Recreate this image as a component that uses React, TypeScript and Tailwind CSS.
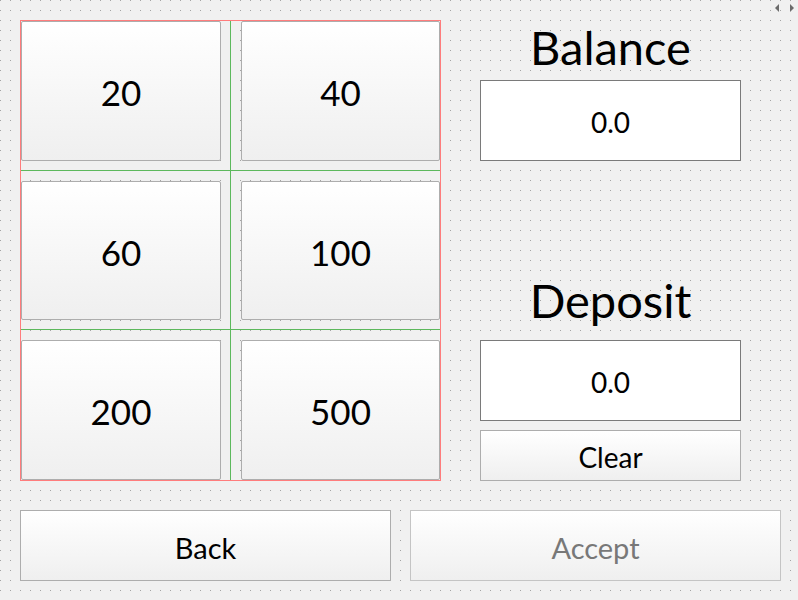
import React from "react";

const font = { fontFamily: "Lato, 'Noto Sans', sans-serif" };

function GridButton({ label }: { label: string }) {
  return (
    <div className="flex items-center justify-center pt-[3px] border border-[#adadad] rounded-[2px] bg-[linear-gradient(to_bottom,#ffffff,#efefef)] text-[35px] leading-none text-black">
      {label}
    </div>
  );
}

export default function App() {
  return (
    <div
      style={font}
      className="relative w-[798px] h-[600px] overflow-hidden bg-[#a3a3a3] bg-[linear-gradient(to_bottom,transparent_1px,#f0f0f0_1px),linear-gradient(to_right,transparent_1px,#f0f0f0_1px)] bg-[size:10px_10px]"
    >
      <div className="absolute right-[4px] top-[4px] flex gap-[11px]">
        <svg width="4" height="8" viewBox="0 0 4 8">
          <polygon points="4,0 4,8 0,4" fill="#6b6b6b" />
        </svg>
        <svg width="4" height="8" viewBox="0 0 4 8">
          <polygon points="0,0 0,8 4,4" fill="#6b6b6b" />
        </svg>
      </div>

      <div className="flex flex-col pl-[20px] pt-[20px]">
        <div className="flex">
          {/* Grid frame */}
          <div className="relative w-[421px] h-[461px] border border-[#ff7c7c]">
            <div className="grid grid-cols-[200px_199px] grid-rows-[140px_139px_140px] gap-x-[20px] gap-y-[20px]">
              <GridButton label="20" />
              <GridButton label="40" />
              <GridButton label="60" />
              <GridButton label="100" />
              <GridButton label="200" />
              <GridButton label="500" />
            </div>
            <div className="absolute left-[209px] top-0 bottom-0 w-px bg-[#5cb85c]" />
            <div className="absolute left-0 right-0 top-[149px] h-px bg-[#5cb85c]" />
            <div className="absolute left-0 right-0 top-[308px] h-px bg-[#5cb85c]" />
          </div>

          {/* Right column */}
          <div className="ml-[39px] w-[261px] flex flex-col">
            <div className="h-[60px] pt-[3px] text-center text-[47px] leading-[48px] text-black">
              Balance
            </div>
            <div className="h-[81px] flex items-center justify-center pt-[2px] border border-[#7a7a7a] bg-white text-[28px] leading-none text-black">
              0.0
            </div>
            <div className="h-[115px]" />
            <div className="h-[48px] text-center text-[47px] leading-[48px] text-black">
              Deposit
            </div>
            <div className="mt-[16px] h-[81px] flex items-center justify-center pt-[2px] border border-[#7a7a7a] bg-white text-[28px] leading-none text-black">
              0.0
            </div>
            <div className="mt-[9px] h-[51px] flex items-center justify-center pt-[2px] border border-[#adadad] bg-[linear-gradient(to_bottom,#ffffff,#efefef)] text-[28px] leading-none text-black">
              Clear
            </div>
          </div>
        </div>

        <div className="mt-[29px] flex gap-[19px]">
          <div className="w-[371px] h-[71px] flex items-center justify-center pt-[4px] border border-[#adadad] bg-[linear-gradient(to_bottom,#ffffff,#efefef)] text-[29px] leading-none text-black">
            Back
          </div>
          <div className="w-[371px] h-[71px] flex items-center justify-center pt-[4px] border border-[#c4c4c4] bg-[linear-gradient(to_bottom,#ffffff,#efefef)] text-[29px] leading-none text-[#787878]">
            Accept
          </div>
        </div>
      </div>
    </div>
  );
}
